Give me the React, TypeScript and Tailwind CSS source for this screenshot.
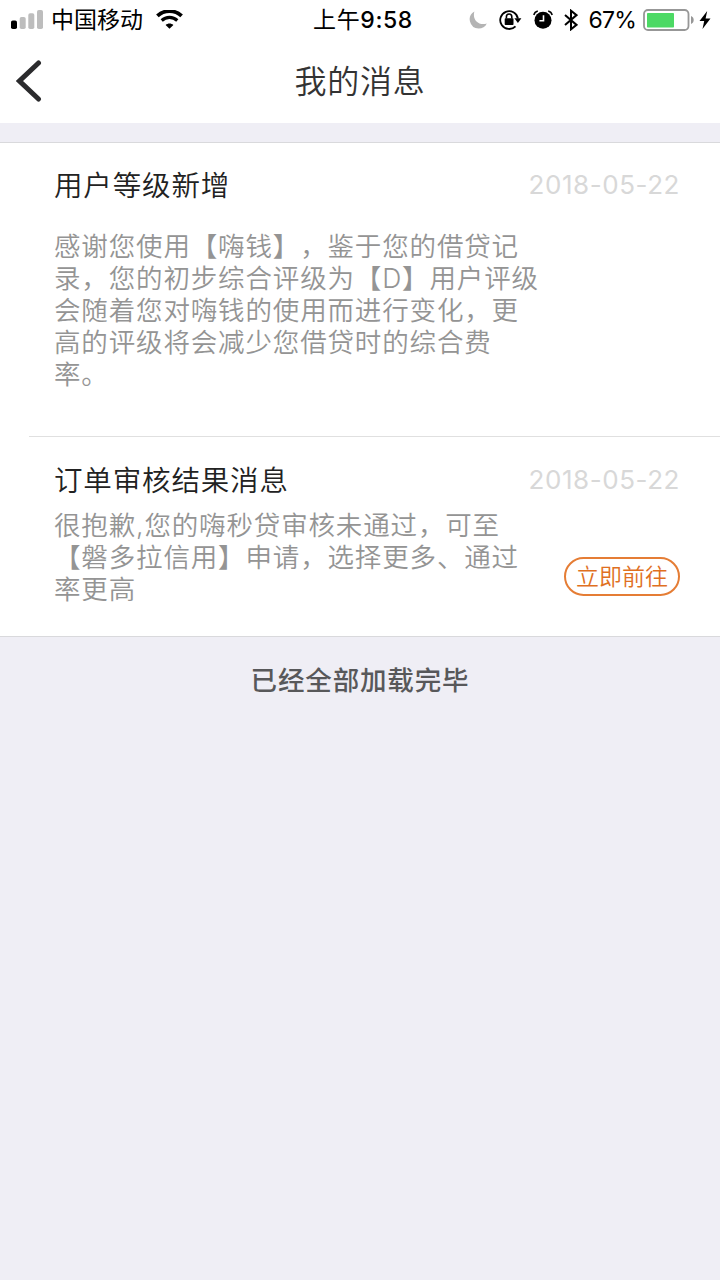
import type { ReactNode } from "react";

type Message = {
  title: string;
  date: string;
  lines: string[];
  action?: string;
};

const messages: Message[] = [
  {
    title: "用户等级新增",
    date: "2018-05-22",
    lines: [
      "感谢您使用【嗨钱】，鉴于您的借贷记",
      "录，您的初步综合评级为【D】用户评级",
      "会随着您对嗨钱的使用而进行变化，更",
      "高的评级将会减少您借贷时的综合费",
      "率。",
    ],
  },
  {
    title: "订单审核结果消息",
    date: "2018-05-22",
    lines: [
      "很抱歉,您的嗨秒贷审核未通过，可至",
      "【磐多拉信用】申请，选择更多、通过",
      "率更高",
    ],
    action: "立即前往",
  },
];

const SignalIcon = () => (
  <svg width="32" height="20" viewBox="0 0 32 20" className="shrink-0">
    <rect x="0" y="10.5" width="6" height="8.5" rx="1.8" fill="#000" />
    <rect x="8.7" y="7" width="6" height="12" rx="1.8" fill="#bdbdbd" />
    <rect x="17.3" y="3.2" width="6" height="15.8" rx="1.8" fill="#bdbdbd" />
    <rect x="26" y="0" width="6" height="19" rx="1.8" fill="#bdbdbd" />
  </svg>
);

const WifiIcon = () => (
  <svg width="27" height="20" viewBox="0 0 27 20" fill="none" className="shrink-0">
    <path d="M1.4 5.9C8-.5 19-.5 25.600 5.900" stroke="#000" strokeWidth="3.700" />
    <path d="M5.700 10.500c4.400-4.100 11.200-4.100 15.600 0" stroke="#000" strokeWidth="3.200" />
    <path d="M9.600 14.900c2.200-2 5.600-2 7.800 0L13.500 18.700z" fill="#000" />
  </svg>
);

const MoonIcon = () => (
  <svg width="18" height="18" viewBox="0 0 18 18" className="shrink-0">
    <path
      d="M5.400.4A9.200 9.200 0 0 0 9.600 17.600c3.700 0 6.800-2 8.200-5.200-1.200.5-2.300.7-3.600.7C8.900 13.100 4.900 9.200 4.900 4c0-1.300.1-2.500.5-3.600z"
      fill="#b4b4b4"
    />
  </svg>
);

const RotationLockIcon = () => (
  <svg width="23" height="22" viewBox="0 0 23 22" fill="none" className="shrink-0">
    <path d="M16.500 17.300A8.900 8.900 0 1 1 18.900 9.500" stroke="#000" strokeWidth="1.800" />
    <path d="M15.400 9.300h7l-3.500 4.600z" fill="#000" />
    <rect x="5.700" y="9.300" width="8.800" height="6.700" rx="0.8" fill="#000" />
    <path d="M7.400 9.600V7.700a2.700 2.700 0 0 1 5.400 0V9.600" stroke="#000" strokeWidth="1.600" />
  </svg>
);

const AlarmIcon = () => (
  <svg width="20" height="20" viewBox="0 0 20 20" fill="none" className="shrink-0">
    <circle cx="10" cy="10.300" r="8.500" fill="#000" />
    <path d="M.8 5C1.300 3 2.800 1.500 4.800 1M19.200 5C18.700 3 17.200 1.500 15.200 1" stroke="#000" strokeWidth="1.500" />
    <path d="M10.500 5.200v5.600H6.400" stroke="#fff" strokeWidth="1.600" />
  </svg>
);

const BluetoothIcon = () => (
  <svg width="14" height="22" viewBox="0 0 14 22" fill="none" className="shrink-0">
    <path d="M1 6 12.500 15.900 7 20.300V1.700L12.500 6.100 1 16" stroke="#000" strokeWidth="2" />
  </svg>
);

const BatteryIcon = () => (
  <svg width="52" height="22" viewBox="0 0 52 22" fill="none" className="shrink-0">
    <rect x="1" y="1" width="44.500" height="20" rx="4" stroke="#979797" strokeWidth="1.800" />
    <rect x="4" y="4" width="27" height="14.500" rx="0.8" fill="#4cd964" />
    <path d="M48 7c1.800.7 2.700 2.200 2.700 4s-.9 3.300-2.700 4z" fill="#979797" />
  </svg>
);

const BoltIcon = () => (
  <svg width="12" height="18" viewBox="0 0 12 18" className="shrink-0">
    <path d="M8.200 0 .5 10h4.700L3.500 18 11.500 7.500H6.600z" fill="#000" />
  </svg>
);

const StatusBar = () => (
  <div className="grid h-10 grid-cols-[1fr_auto_1fr] items-center text-[23px] text-black">
    <div className="flex items-center pl-[11px]">
      <SignalIcon />
      <span className="ml-[8px]">中国移动</span>
      <span className="ml-[13px]">
        <WifiIcon />
      </span>
    </div>
    <div className="pl-[6px] tracking-[0.6px]">
      上午<span className="font-[550]">9:58</span>
    </div>
    <div className="flex items-center justify-end pr-[9px]">
      <MoonIcon />
      <span className="ml-[12px]">
        <RotationLockIcon />
      </span>
      <span className="ml-[11px]">
        <AlarmIcon />
      </span>
      <span className="ml-[11px]">
        <BluetoothIcon />
      </span>
      <span className="ml-[11px] tracking-[-0.8px]">67%</span>
      <span className="ml-[7px]">
        <BatteryIcon />
      </span>
      <span className="ml-[4px]">
        <BoltIcon />
      </span>
    </div>
  </div>
);

const NavBar = ({ children }: { children: ReactNode }) => (
  <div className="grid h-[83px] grid-cols-[1fr_auto_1fr] items-center">
    <button className="pb-[2px] pl-4" aria-label="返回">
      <svg width="26" height="42" viewBox="0 0 26 42" fill="none">
        <path d="M22.500 3 3.500 21 22.500 39" stroke="#2b2b2d" strokeWidth="5" strokeLinecap="round" />
      </svg>
    </button>
    <h1 className="text-[32px] font-[350] tracking-[0.7px] text-[#333]">{children}</h1>
  </div>
);

const MessageBody = ({ lines }: { lines: string[] }) => (
  <div className="text-[26.5px] leading-8 font-[350] tracking-[0.85px] whitespace-nowrap text-[#949494]">
    {lines.map((line) => (
      <p key={line}>{line}</p>
    ))}
  </div>
);

const MessageHeading = ({ title, date }: { title: string; date: string }) => (
  <div className="flex h-10 items-center justify-between pr-10">
    <h2 className="pt-[2px] text-[28.5px] font-[350] tracking-[0.85px] text-[#222]">{title}</h2>
    <span className="pb-[2px] text-[26px] tracking-[0.55px] text-[#d8d8d8]">{date}</span>
  </div>
);

export default function App() {
  const [first, second] = messages;

  return (
    <div className="h-[1280px] w-[720px] overflow-hidden bg-[#efeef5] font-['Inter','Noto_Sans_CJK_SC',sans-serif] [text-spacing-trim:space-all]">
      <header className="bg-white">
        <StatusBar />
        <NavBar>我的消息</NavBar>
      </header>

      <main className="mt-[19px] border-y border-[#d9d9dc] bg-white">
        <section className="h-[293px] pt-[22px] pl-[54px]">
          <MessageHeading title={first.title} date={first.date} />
          <div className="pt-[25px]">
            <MessageBody lines={first.lines} />
          </div>
        </section>
        <section className="ml-[29px] h-[200px] border-t border-[#e0e0e0] pt-[23px] pl-[25px]">
          <MessageHeading title={second.title} date={second.date} />
          <div className="flex items-end justify-between pt-[9px] pr-10">
            <MessageBody lines={second.lines} />
            <button className="mb-[9px] flex h-[39px] w-[116px] items-center justify-center rounded-full border-2 border-[#e57d35] text-[23px] font-[350] whitespace-nowrap text-[#e0701f]">
              <span className="pt-px">{second.action}</span>
            </button>
          </div>
        </section>
      </main>

      <p className="pt-[23px] text-center text-[26.5px] leading-10 font-medium tracking-[0.85px] text-[#58585a]">
        已经全部加载完毕
      </p>
    </div>
  );
}
